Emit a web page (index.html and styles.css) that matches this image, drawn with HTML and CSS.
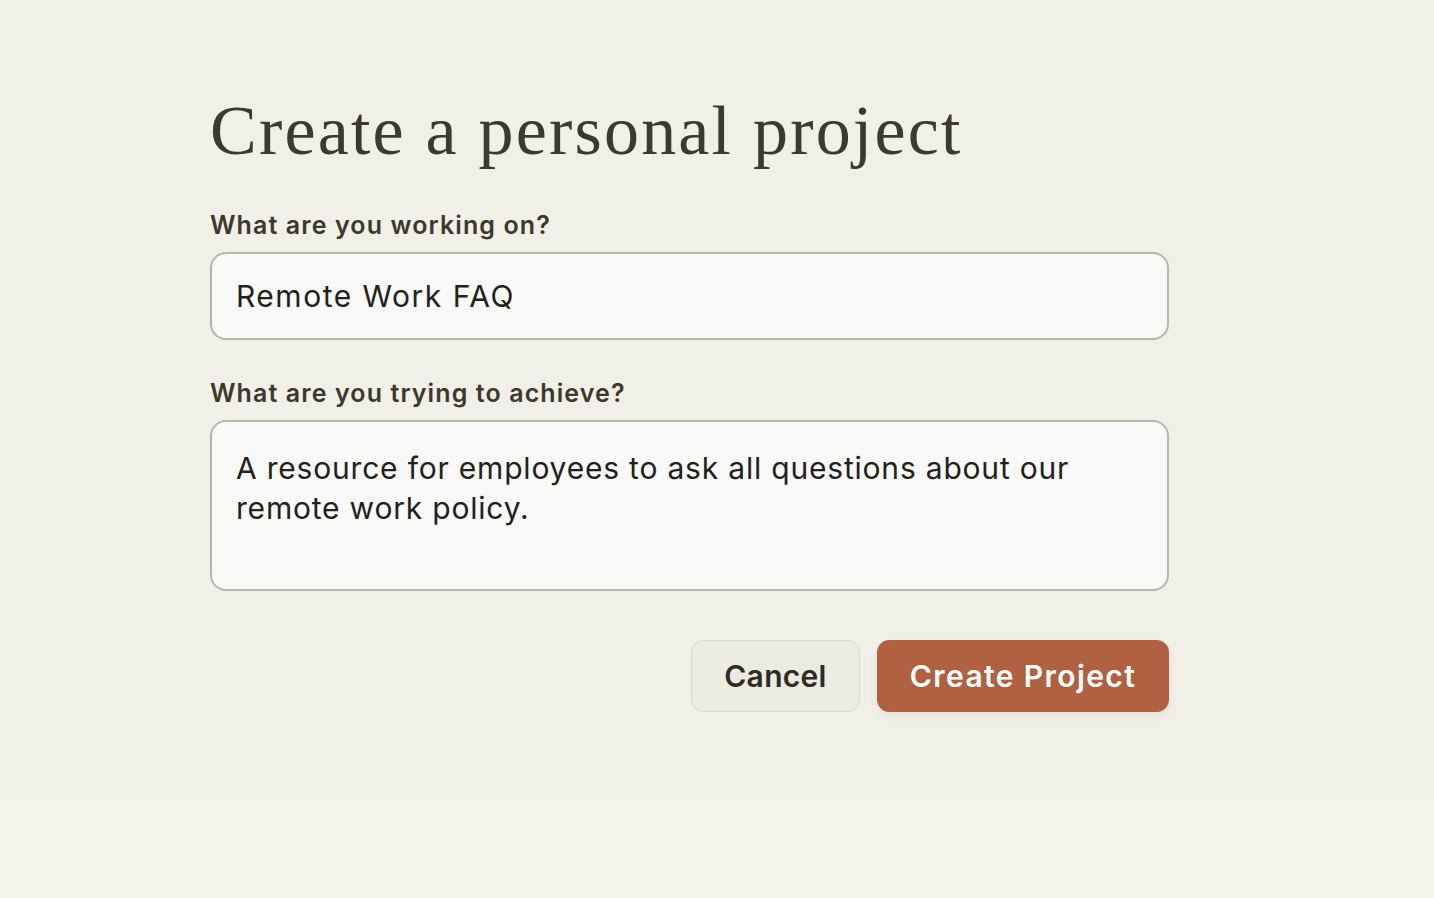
FILE: index.html
```html
<!DOCTYPE html>
<html lang="en">
<head>
<meta charset="utf-8">
<title>Create a personal project</title>
<link rel="stylesheet" href="styles.css">
</head>
<body>
<main class="page">
  <form class="form">
    <h1 class="title">Create a personal project</h1>
    <label class="label" for="name">What are you working on?</label>
    <div class="input" id="name">Remote Work FAQ</div>
    <label class="label label-2" for="goal">What are you trying to achieve?</label>
    <div class="textarea" id="goal">A resource for employees to ask all questions about our remote work policy.</div>
    <div class="actions">
      <button type="button" class="btn btn-cancel">Cancel</button>
      <button type="button" class="btn btn-primary">Create Project</button>
    </div>
  </form>
</main>
<footer class="bottom"></footer>
</body>
</html>
```
FILE: styles.css
```css
html, body {
  margin: 0;
  padding: 0;
}
body {
  background: #f4f3ec;
  font-family: "Inter", "Noto Sans", sans-serif;
  color: #2b2a22;
}
.page {
  height: 800px;
  background: #f0efe8;
  box-sizing: border-box;
  padding: 88px 0 0 210px;
}
.form {
  width: 959px;
  display: flex;
  flex-direction: column;
}
.title {
  margin: 0 0 36px 0;
  font-family: "Liberation Serif", "DejaVu Serif", serif;
  font-weight: 400;
  font-size: 70px;
  line-height: 86px;
  color: #3b3a2c;
  letter-spacing: 2.2px;
}
.label {
  font-size: 25px;
  font-weight: 600;
  color: #3b392b;
  line-height: 30px;
  margin-bottom: 12px;
  letter-spacing: 1.1px;
}
.label-2 {
  margin-top: 38px;
}
.input, .textarea {
  box-sizing: border-box;
  background: #f8f8f7;
  border: 2px solid #b8b6aa;
  border-radius: 16px;
  font-size: 30px;
  color: #22211c;
  padding: 0 24px;
  letter-spacing: 0.8px;
}
.input {
  height: 88px;
  display: flex;
  align-items: center;
  letter-spacing: 1.5px;
}
.textarea {
  height: 171px;
  padding-top: 26px;
  line-height: 40px;
}
.actions {
  display: flex;
  justify-content: flex-end;
  gap: 17px;
  margin-top: 49px;
}
.btn {
  height: 72px;
  border-radius: 12px;
  font-family: "Inter", "Noto Sans", sans-serif;
  font-size: 30px;
  font-weight: 600;
  padding: 0;
  cursor: pointer;
}
.btn-cancel {
  width: 169px;
  background: #ecebe2;
  border: 1px solid #dcdad0;
  color: #2d2c26;
  letter-spacing: 0.3px;
}
.btn-primary {
  width: 292px;
  background: #b06142;
  border: 1px solid #b06142;
  color: #ffffff;
  letter-spacing: 1.4px;
  box-shadow: 0 4px 8px rgba(120, 90, 60, 0.08);
}
.bottom {
  height: 98px;
  background: #f4f3ec;
}
```
